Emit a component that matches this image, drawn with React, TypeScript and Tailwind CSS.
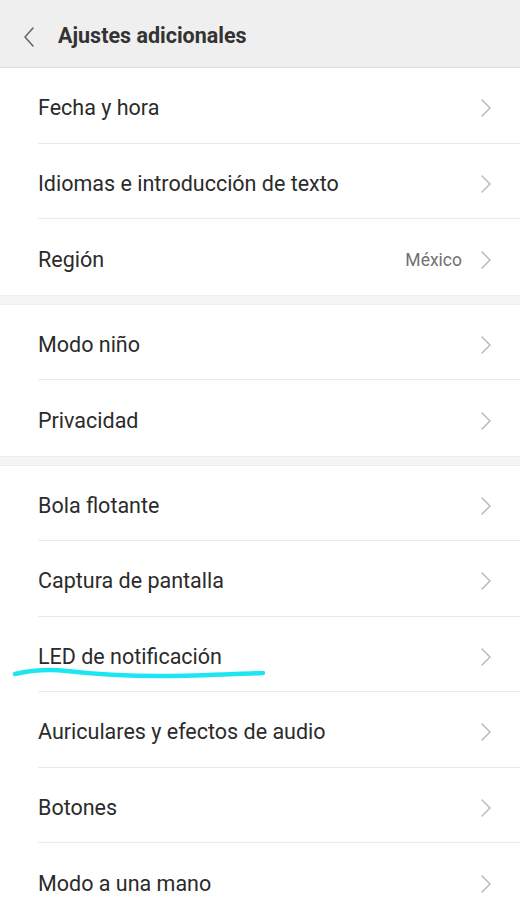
import { Fragment } from "react";

type Row = { label: string; value?: string; mark?: boolean };

const SECTIONS: Row[][] = [
  [{ label: "Fecha y hora" }, { label: "Idiomas e introducción de texto" }, { label: "Región", value: "México" }],
  [{ label: "Modo niño" }, { label: "Privacidad" }],
  [
    { label: "Bola flotante" },
    { label: "Captura de pantalla" },
    { label: "LED de notificación", mark: true },
    { label: "Auriculares y efectos de audio" },
    { label: "Botones" },
    { label: "Modo a una mano" },
  ],
];

function Chevron() {
  return (
    <svg width="12" height="20" viewBox="0 0 12 20" fill="none" className="shrink-0">
      <path d="M2 2l8 8-8 8" stroke="#b5b5b5" strokeWidth="1.4" strokeLinecap="round" strokeLinejoin="round" />
    </svg>
  );
}

export default function App() {
  return (
    <div className="h-[900px] w-[520px] overflow-hidden bg-white font-['Roboto',sans-serif]">
      {/* Header */}
      <div className="flex h-[68px] items-center border-b border-[#dcdcdc] bg-[#efefef] pl-[22px] pt-[6px]">
        <svg width="14" height="22" viewBox="0 0 14 22" fill="none">
          <path d="M11 2L3 11l8 9" stroke="#666" strokeWidth="1.6" strokeLinecap="round" strokeLinejoin="round" />
        </svg>
        <span className="ml-[22px] text-[21.5px] font-bold text-[#333]">Ajustes adicionales</span>
      </div>

      {SECTIONS.map((rows, si) => (
        <Fragment key={si}>
          {si > 0 && <div className="h-[10px] border-y border-[#ededed] bg-[#f5f5f5]" />}
          <div className="pl-[38px]">
            {rows.map((r, i) => (
              <div
                key={r.label}
                className={`relative flex h-[75.5px] items-center pr-[28px] pt-[6px] ${i < rows.length - 1 ? "border-b border-[#eaeaea]" : ""}`}
              >
                <span className="flex-1 text-[21.5px] text-[#2b2b2b]">{r.label}</span>
                {r.value && <span className="mr-[18px] text-[17.5px] text-[#707070]">{r.value}</span>}
                <Chevron />
                {r.mark && (
                  <svg className="absolute left-[-26px] top-[49px]" width="260" height="14" viewBox="0 0 260 14" fill="none">
                    <path
                      d="M3 8C20 4 35 3 55 5C80 8 110 10 150 10C190 10 220 8 251 7"
                      stroke="#1de6f2"
                      strokeWidth="4.5"
                      strokeLinecap="round"
                    />
                  </svg>
                )}
              </div>
            ))}
          </div>
        </Fragment>
      ))}
    </div>
  );
}
